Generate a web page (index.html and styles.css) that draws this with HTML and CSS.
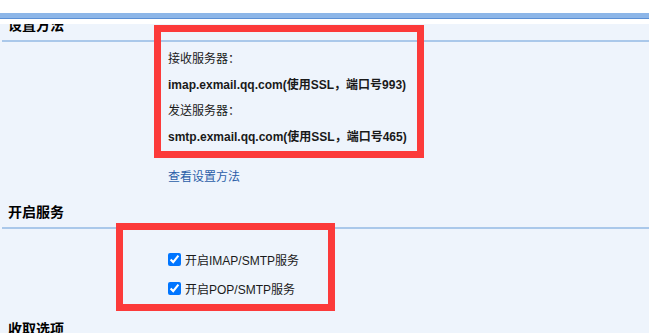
FILE: index.html
```html
<!DOCTYPE html>
<html>
<head>
  <meta charset="utf-8">
  <title>客户端设置</title>
  <link rel="stylesheet" href="styles.css">
</head>
<body>
  <div class="topbar"></div>
  <div class="panel">
    <div class="content">
      <div class="section">
        <div class="section-title">设置方法</div>
        <div class="section-body setup">
          <div class="row">接收服务器：</div>
          <div class="row strong">imap.exmail.qq.com(使用SSL，端口号993)</div>
          <div class="row">发送服务器：</div>
          <div class="row strong">smtp.exmail.qq.com(使用SSL，端口号465)</div>
          <div class="row link-row"><a href="#" class="link">查看设置方法</a></div>
        </div>
      </div>

      <div class="section">
        <div class="section-title">开启服务</div>
        <div class="section-body services">
          <label class="check-row"><input type="checkbox" checked> 开启IMAP/SMTP服务</label>
          <label class="check-row"><input type="checkbox" checked> 开启POP/SMTP服务</label>
        </div>
      </div>

      <div class="section">
        <div class="section-title">收取选项</div>
        <div class="section-body"></div>
      </div>
    </div>

    <!-- annotation boxes -->
    <div class="mark mark-server"></div>
    <div class="mark mark-service"></div>
  </div>
</body>
</html>
```

FILE: styles.css
```css
/* CSS*/
body {
  font-family: "Liberation Sans", "Noto Sans CJK SC", sans-serif;
  font-size: 12px;
  color: #1a1a1a;
  background-color: #fff;
  margin: 0;
  padding: 0;
  overflow: hidden;
}

.topbar {
  margin-top: 13px;
  height: 5px;
  background-color: #8db6e8;
  border-bottom: 1px solid #5b8fd4;
}

.panel {
  position: relative;
  margin-top: 5px;
  height: 309px;
  overflow: hidden;
  background-color: #eef4fc;
}

/* scrolled a little, so the first title is cut off */
.content {
  margin-top: -13px;
}

.section-title {
  padding: 4px 6px 5px;
  margin-left: 2px;
  font-size: 14px;
  line-height: 20px;
  font-weight: bold;
  color: #000;
  border-bottom: 2px solid #aac8ea;
}

.section-body {
  padding-left: 168px;
}

.setup {
  padding-top: 4px;
  padding-bottom: 8px;
}

.row {
  height: 26px;
  line-height: 26px;
  white-space: nowrap;
}

.strong {
  font-weight: bold;
}

.link-row {
  margin-top: 14px;
}

.link {
  color: #2b5ea8;
  text-decoration: none;
}

.services {
  padding-top: 16px;
  padding-bottom: 12px;
}

.check-row {
  display: flex;
  align-items: center;
  height: 29px;
  white-space: nowrap;
}

.check-row input {
  margin: 0 4px 0 0;
  width: 13px;
  height: 13px;
}

.mark {
  position: absolute;
  border: 7px solid #fc3a3a;
}

.mark-server {
  left: 154px;
  top: 1px;
  width: 256px;
  height: 119px;
}

.mark-service {
  left: 116px;
  top: 199px;
  width: 205px;
  height: 74px;
}
```
